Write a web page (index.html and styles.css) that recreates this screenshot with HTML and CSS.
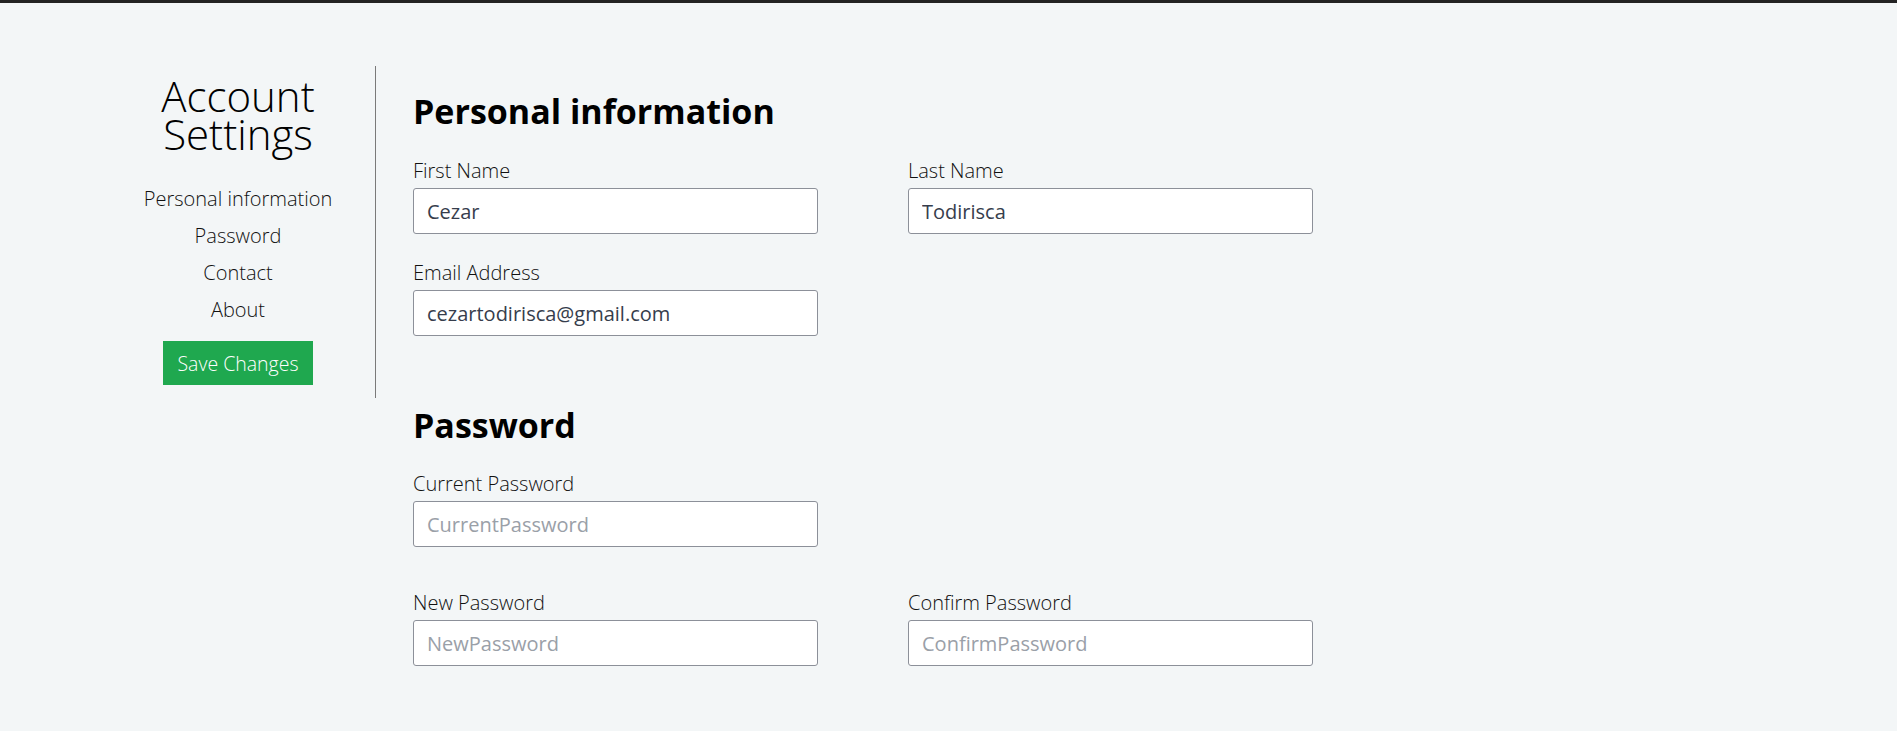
FILE: index.html
```html
<!DOCTYPE html>
<html lang="en">
<head>
<meta charset="utf-8">
<title>Account Settings</title>
<link rel="stylesheet" href="styles.css">
</head>
<body>
<div class="topbar"></div>
<div class="page">
  <aside class="sidebar">
    <h1 class="side-title"><span class="title-line">Account</span><span class="title-line">Settings</span></h1>
    <ul class="side-nav">
      <li>Personal information</li>
      <li>Password</li>
      <li>Contact</li>
      <li>About</li>
    </ul>
    <button class="save-btn" type="button">Save Changes</button>
  </aside>
  <main class="content">
    <h2 class="section-title">Personal information</h2>
    <div class="form-grid first-grid">
      <div class="field">
        <label class="field-label">First Name</label>
        <input class="field-input" type="text" value="Cezar">
      </div>
      <div class="field">
        <label class="field-label">Last Name</label>
        <input class="field-input" type="text" value="Todirisca">
      </div>
      <div class="field">
        <label class="field-label">Email Address</label>
        <input class="field-input" type="text" value="cezartodirisca@gmail.com">
      </div>
    </div>

    <h2 class="section-title section-gap">Password</h2>
    <div class="form-grid">
      <div class="field">
        <label class="field-label">Current Password</label>
        <input class="field-input" type="password" placeholder="CurrentPassword">
      </div>
    </div>
    <div class="form-grid pw-row">
      <div class="field">
        <label class="field-label">New Password</label>
        <input class="field-input" type="password" placeholder="NewPassword">
      </div>
      <div class="field">
        <label class="field-label">Confirm Password</label>
        <input class="field-input" type="password" placeholder="ConfirmPassword">
      </div>
    </div>
  </main>
</div>
</body>
</html>
```

FILE: styles.css
```css
html, body {
  margin: 0;
  padding: 0;
}

body {
  background: #f3f6f7;
  font-family: "Open Sans", "Noto Sans", sans-serif;
  color: #111;
  min-height: 731px;
}

.topbar {
  height: 3px;
  background: #232323;
}

.page {
  display: flex;
  align-items: flex-start;
  margin-top: 63px;
  padding-left: 101px;
}

.sidebar {
  width: 274px;
  border-right: 1px solid #7a7a7a;
  padding: 11px 0 13px;
  display: flex;
  flex-direction: column;
  align-items: center;
}

.side-title {
  margin: 0;
  font-weight: 300;
  font-size: 42px;
  line-height: 38px;
  text-align: center;
  color: #000;
  display: flex;
  flex-direction: column;
  align-items: center;
}

.title-line {
  display: block;
  height: 38px;
}

.side-nav {
  list-style: none;
  margin: 27px 0 0;
  padding: 0;
  text-align: center;
}

.side-nav li {
  font-size: 20px;
  font-weight: 300;
  line-height: 37px;
  color: #111;
}

.save-btn {
  margin-top: 13px;
  width: 150px;
  height: 44px;
  border: none;
  border-radius: 0;
  background: #1fa84f;
  color: #fff;
  font-family: "Open Sans", "Noto Sans", sans-serif;
  font-weight: 300;
  font-size: 19.5px;
  padding: 0;
}

.content {
  padding-left: 37px;
  padding-top: 25px;
}

.section-title {
  margin: 0;
  font-size: 34px;
  font-weight: 700;
  line-height: 40px;
  color: #000;
}

.section-gap {
  margin-top: 69px;
}

.form-grid {
  display: grid;
  grid-template-columns: 405px 405px;
  column-gap: 90px;
  row-gap: 26px;
  margin-top: 26px;
}

.first-grid {
  margin-top: 27px;
}

.pw-row {
  margin-top: 43px;
}

.field {
  display: flex;
  flex-direction: column;
}

.field-label {
  font-size: 20px;
  font-weight: 300;
  line-height: 26px;
  color: #111;
  margin-bottom: 4px;
}

.field-input {
  box-sizing: border-box;
  width: 405px;
  height: 46px;
  border: 1px solid #8c9099;
  border-radius: 3px;
  background: #fff;
  padding: 0 13px;
  font-family: "Open Sans", "Noto Sans", sans-serif;
  font-size: 20px;
  font-weight: 400;
  color: #363d4c;
  outline: none;
}

.field-input::placeholder {
  color: #9aa0a8;
  opacity: 1;
}
```
